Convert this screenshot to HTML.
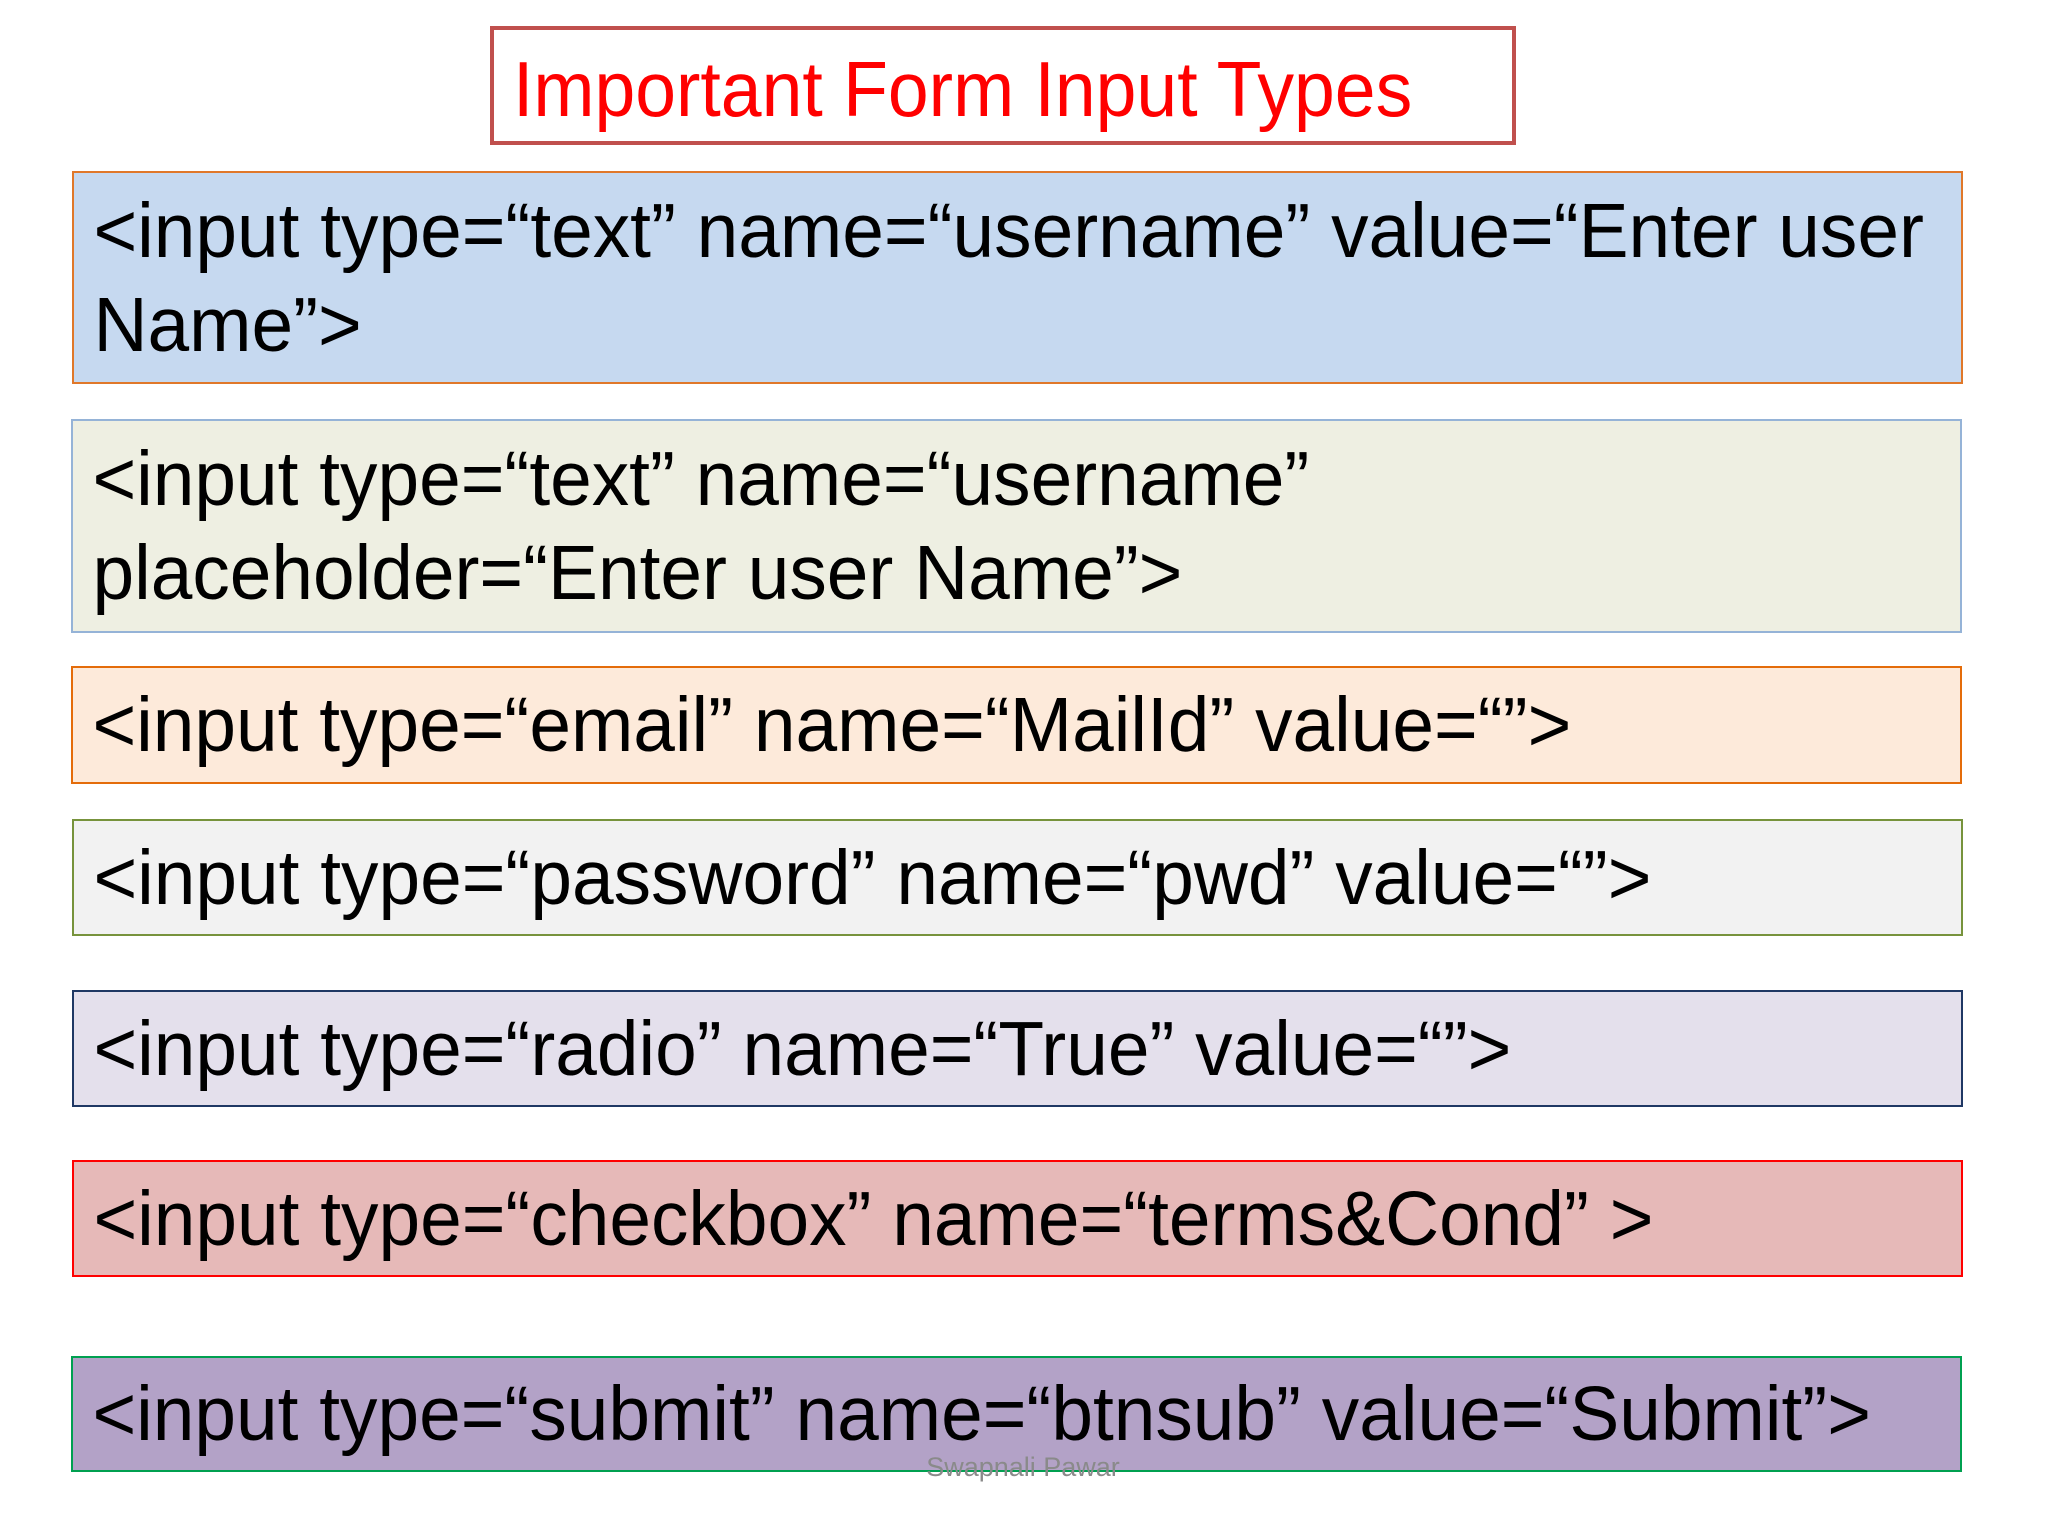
<!DOCTYPE html>
<html><head><meta charset="utf-8"><style>
html,body{margin:0;padding:0;background:#fff;}
body{width:2048px;height:1536px;position:relative;overflow:hidden;font-family:"Liberation Sans",sans-serif;}
.b{position:absolute;box-sizing:border-box;border:2px solid;display:flex;flex-direction:column;justify-content:center;}
.l{font-size:77px;line-height:94px;color:#000;white-space:nowrap;transform:scaleX(0.972);transform-origin:left center;padding-left:20px;}
</style></head><body>
<div style="position:absolute;left:490px;top:26px;width:1026px;height:119px;box-sizing:border-box;border:4px solid #c0504d;"></div>
<div style="position:absolute;left:513px;top:44px;font-size:78px;line-height:90px;color:#ff0000;white-space:nowrap;transform:scaleX(0.94);transform-origin:left center;">Important Form Input Types</div>

<div class="b" style="left:72px;top:171px;width:1891px;height:213px;background:#c6d9f0;border-color:#e0782a;">
<div class="l">&lt;input type=“text” name=“username” value=“Enter user</div>
<div class="l">Name”&gt;</div></div>

<div class="b" style="left:71px;top:419px;width:1891px;height:214px;background:#eeefe2;border-color:#95b3d7;">
<div class="l">&lt;input type=“text” name=“username”</div>
<div class="l">placeholder=“Enter user Name”&gt;</div></div>

<div class="b" style="left:71px;top:666px;width:1891px;height:118px;background:#fdeada;border-color:#e46c0a;">
<div class="l">&lt;input type=“email” name=“MailId” value=“”&gt;</div></div>

<div class="b" style="left:72px;top:819px;width:1891px;height:117px;background:#f2f2f2;border-color:#77933c;">
<div class="l">&lt;input type=“password” name=“pwd” value=“”&gt;</div></div>

<div class="b" style="left:72px;top:990px;width:1891px;height:117px;background:#e4e0ec;border-color:#1f3864;">
<div class="l">&lt;input type=“radio” name=“True” value=“”&gt;</div></div>

<div class="b" style="left:72px;top:1160px;width:1891px;height:117px;background:#e6b9b8;border-color:#ff0000;">
<div class="l">&lt;input type=“checkbox” name=“terms&amp;Cond” &gt;</div></div>

<div class="b" style="left:71px;top:1356px;width:1891px;height:116px;background:#b3a2c7;border-color:#00a050;">
<div class="l">&lt;input type=“submit” name=“btnsub” value=“Submit”&gt;</div></div>

<div style="position:absolute;left:923px;top:1450px;width:200px;text-align:center;font-size:27px;line-height:34px;color:#8a8a8a;white-space:nowrap;">Swapnali Pawar</div>
</body></html>
